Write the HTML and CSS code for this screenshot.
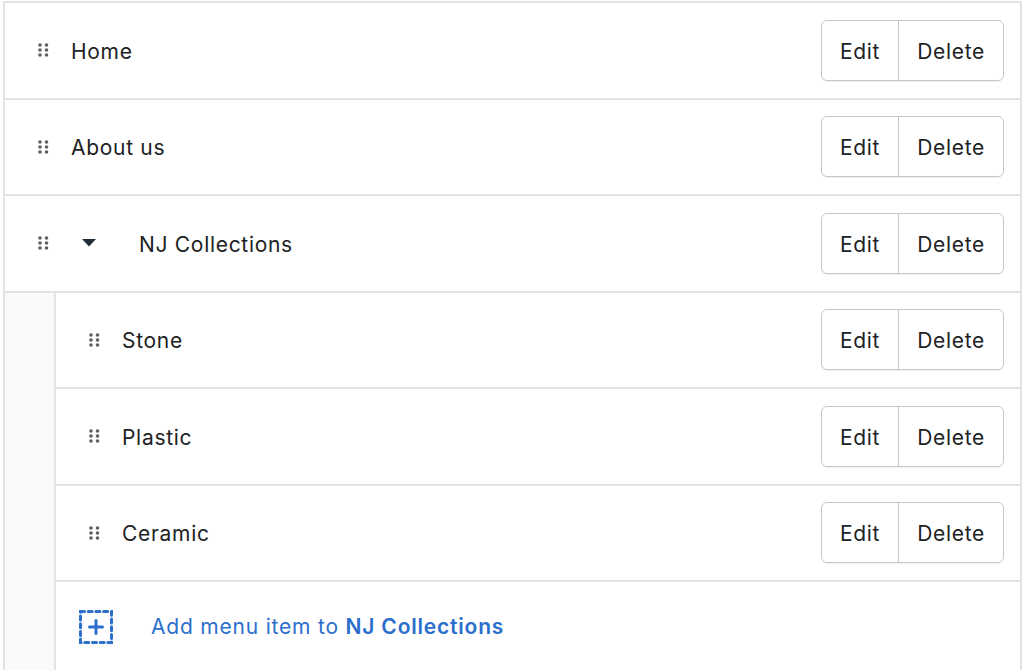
FILE: index.html
```html
<!DOCTYPE html>
<html lang="en">
<head>
    <meta charset="UTF-8">
    <meta name="viewport" content="width=device-width, initial-scale=1.0">
    <title>Menu items</title>
    <link rel="stylesheet" href="styles.css">
</head>
<body>

<div class="menu">
    <div class="item">
        <span class="handle"><svg width="11" height="14" viewBox="0 0 11 14"><g fill="#5c5f62"><circle cx="2" cy="2" r="1.8"/><circle cx="8.5" cy="2" r="1.8"/><circle cx="2" cy="7" r="1.8"/><circle cx="8.5" cy="7" r="1.8"/><circle cx="2" cy="12" r="1.8"/><circle cx="8.5" cy="12" r="1.8"/></g></svg></span>
        <span class="label">Home</span>
        <div class="actions"><button>Edit</button><button>Delete</button></div>
    </div>
    <div class="item">
        <span class="handle"><svg width="11" height="14" viewBox="0 0 11 14"><g fill="#5c5f62"><circle cx="2" cy="2" r="1.8"/><circle cx="8.5" cy="2" r="1.8"/><circle cx="2" cy="7" r="1.8"/><circle cx="8.5" cy="7" r="1.8"/><circle cx="2" cy="12" r="1.8"/><circle cx="8.5" cy="12" r="1.8"/></g></svg></span>
        <span class="label">About us</span>
        <div class="actions"><button>Edit</button><button>Delete</button></div>
    </div>
    <div class="item">
        <span class="handle"><svg width="11" height="14" viewBox="0 0 11 14"><g fill="#5c5f62"><circle cx="2" cy="2" r="1.8"/><circle cx="8.5" cy="2" r="1.8"/><circle cx="2" cy="7" r="1.8"/><circle cx="8.5" cy="7" r="1.8"/><circle cx="2" cy="12" r="1.8"/><circle cx="8.5" cy="12" r="1.8"/></g></svg></span>
        <span class="caret"><svg width="14" height="8" viewBox="0 0 14 8"><polygon points="0,0 14,0 7,7.5" fill="#1f2b36"/></svg></span>
        <span class="label">NJ Collections</span>
        <div class="actions"><button>Edit</button><button>Delete</button></div>
    </div>

    <div class="children">
        <div class="item">
            <span class="handle"><svg width="11" height="14" viewBox="0 0 11 14"><g fill="#5c5f62"><circle cx="2" cy="2" r="1.8"/><circle cx="8.5" cy="2" r="1.8"/><circle cx="2" cy="7" r="1.8"/><circle cx="8.5" cy="7" r="1.8"/><circle cx="2" cy="12" r="1.8"/><circle cx="8.5" cy="12" r="1.8"/></g></svg></span>
            <span class="label">Stone</span>
            <div class="actions"><button>Edit</button><button>Delete</button></div>
        </div>
        <div class="item">
            <span class="handle"><svg width="11" height="14" viewBox="0 0 11 14"><g fill="#5c5f62"><circle cx="2" cy="2" r="1.8"/><circle cx="8.5" cy="2" r="1.8"/><circle cx="2" cy="7" r="1.8"/><circle cx="8.5" cy="7" r="1.8"/><circle cx="2" cy="12" r="1.8"/><circle cx="8.5" cy="12" r="1.8"/></g></svg></span>
            <span class="label">Plastic</span>
            <div class="actions"><button>Edit</button><button>Delete</button></div>
        </div>
        <div class="item">
            <span class="handle"><svg width="11" height="14" viewBox="0 0 11 14"><g fill="#5c5f62"><circle cx="2" cy="2" r="1.8"/><circle cx="8.5" cy="2" r="1.8"/><circle cx="2" cy="7" r="1.8"/><circle cx="8.5" cy="7" r="1.8"/><circle cx="2" cy="12" r="1.8"/><circle cx="8.5" cy="12" r="1.8"/></g></svg></span>
            <span class="label">Ceramic</span>
            <div class="actions"><button>Edit</button><button>Delete</button></div>
        </div>
        <div class="item add">
            <span class="add-icon"><svg width="34" height="34" viewBox="0 0 34 34"><rect x="1.5" y="1.5" width="31" height="31" fill="none" stroke="#2c6ecb" stroke-width="3" stroke-dasharray="4 3.7" stroke-linecap="round"/><path d="M17 10.5v13M10.5 17h13" stroke="#2c6ecb" stroke-width="3" stroke-linecap="round"/></svg></span>
            <span class="add-label">Add menu item to <b>NJ Collections</b></span>
        </div>
    </div>
</div>

</body>
</html>
```

FILE: styles.css
```css
body {
    margin: 0;
    font-family: Inter, "Noto Sans", sans-serif;
    color: #202223;
    background: #fff;
}

.menu {
    margin: 1px 2px 0 3px;
    border-top: 2px solid #e1e3e5;
    border-left: 2px solid #e1e3e5;
    border-right: 2px solid #e1e3e5;
}

.item {
    display: flex;
    align-items: center;
    box-sizing: border-box;
    height: 96.5px;
    padding: 0 16px 0 33px;
    border-bottom: 2px solid #e1e3e5;
    background: #fff;
    font-size: 21px;
    letter-spacing: 0.7px;
}

.handle {
    display: flex;
    width: 11px;
    margin-right: 22px;
}

.caret {
    display: flex;
    margin: 0 43px 0 11px;
}

.label {
    flex: 1;
    padding-top: 2px;
}

.actions {
    display: flex;
    margin-left: -2px;
    border: 1.5px solid #c4c7ca;
    border-radius: 6px;
    box-shadow: 0 1px 0 rgba(0, 0, 0, 0.05);
}

.actions button {
    font-family: inherit;
    font-size: 21px;
    letter-spacing: 0.7px;
    color: #202223;
    background: #fff;
    border: none;
    height: 59px;
    padding: 2px 18px 0;
    border-radius: 6px;
    cursor: pointer;
}

.actions button + button {
    border-left: 1.5px solid #c4c7ca;
    border-radius: 0 6px 6px 0;
}

.children {
    background: #f9fafa;
    padding-left: 49px;
}

.children .item {
    border-left: 2px solid #e1e3e5;
}

.add {
    height: 92px;
    padding-left: 23px;
    border-bottom: none;
}

.add-icon {
    display: flex;
    margin-right: 38px;
    margin-top: -2px;
}

.add-label {
    color: #2c6ecb;
    letter-spacing: 0.8px;
    margin-top: -4px;
}

.add-label b {
    font-weight: 600;
}
```
